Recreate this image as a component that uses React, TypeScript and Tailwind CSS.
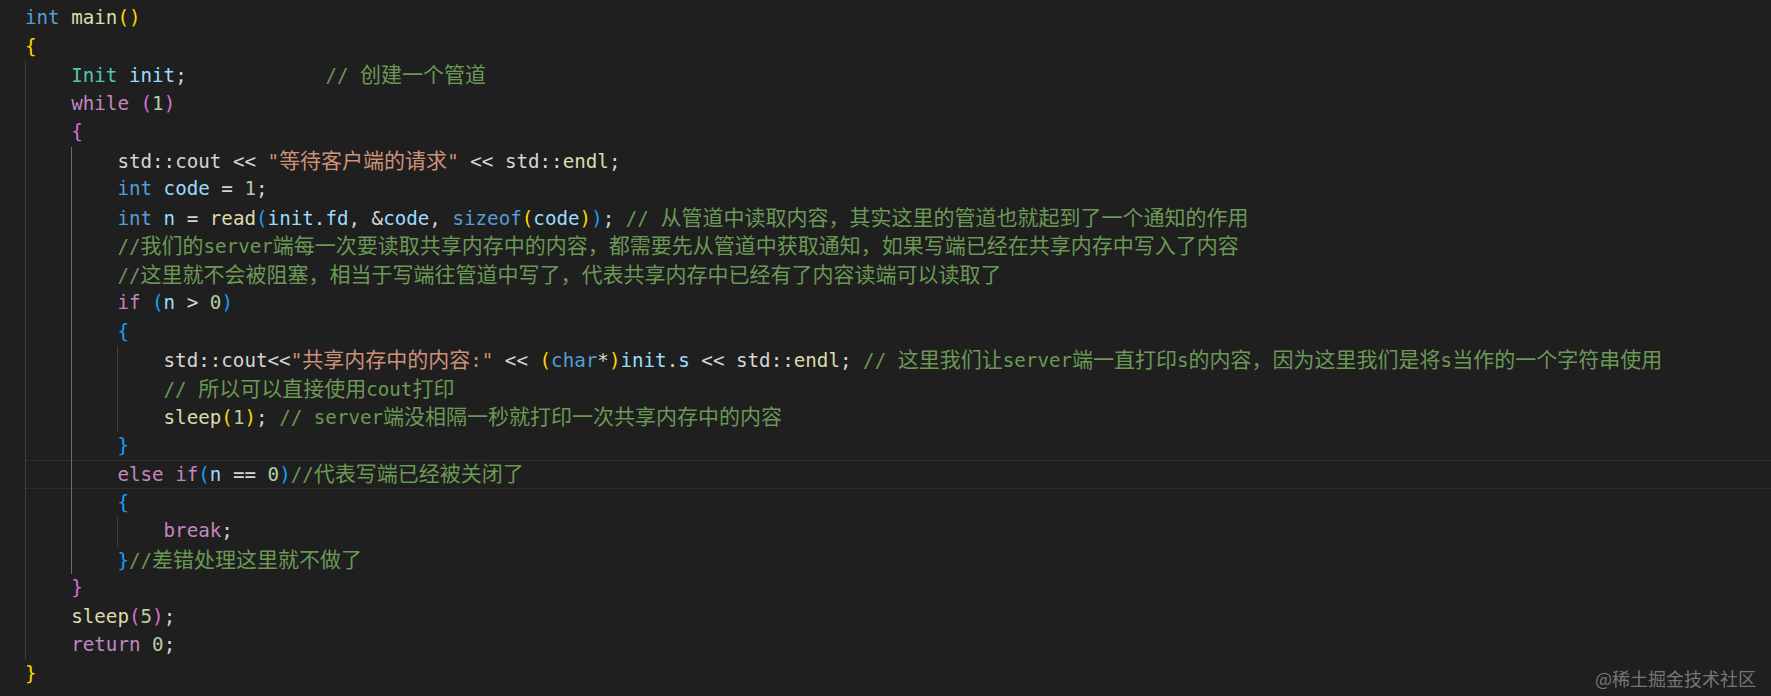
import React from 'react';

const C = {
  k: 'text-[#569cd6]',
  t: 'text-[#4ec9b0]',
  v: 'text-[#9cdcfe]',
  f: 'text-[#dcdcaa]',
  c: 'text-[#c586c0]',
  n: 'text-[#b5cea8]',
  s: 'text-[#ce9178]',
  m: 'text-[#6a9955]',
  p: 'text-[#d4d4d4]',
  y: 'text-[#ffd700]',
  o: 'text-[#da70d6]',
  b: 'text-[#179fff]',
};

type Tok = [keyof typeof C, string];
type Line = { indent: number; toks: Tok[] };

const lines: Line[] = [
  { indent: 0, toks: [['k', 'int'], ['p', ' '], ['f', 'main'], ['y', '()']] },
  { indent: 0, toks: [['y', '{']] },
  { indent: 1, toks: [['t', 'Init'], ['p', ' '], ['v', 'init'], ['p', ';            '], ['m', '// 创建一个管道']] },
  { indent: 1, toks: [['c', 'while'], ['p', ' '], ['o', '('], ['n', '1'], ['o', ')']] },
  { indent: 1, toks: [['o', '{']] },
  { indent: 2, toks: [['p', 'std::cout << '], ['s', '"等待客户端的请求"'], ['p', ' << std::'], ['f', 'endl'], ['p', ';']] },
  { indent: 2, toks: [['k', 'int'], ['p', ' '], ['v', 'code'], ['p', ' = '], ['n', '1'], ['p', ';']] },
  {
    indent: 2,
    toks: [
      ['k', 'int'], ['p', ' '], ['v', 'n'], ['p', ' = '], ['f', 'read'], ['b', '('], ['v', 'init'], ['p', '.'], ['v', 'fd'],
      ['p', ', &'], ['v', 'code'], ['p', ', '], ['k', 'sizeof'], ['y', '('], ['v', 'code'], ['y', ')'], ['b', ')'], ['p', '; '],
      ['m', '// 从管道中读取内容，其实这里的管道也就起到了一个通知的作用'],
    ],
  },
  { indent: 2, toks: [['m', '//我们的server端每一次要读取共享内存中的内容，都需要先从管道中获取通知，如果写端已经在共享内存中写入了内容']] },
  { indent: 2, toks: [['m', '//这里就不会被阻塞，相当于写端往管道中写了，代表共享内存中已经有了内容读端可以读取了']] },
  { indent: 2, toks: [['c', 'if'], ['p', ' '], ['b', '('], ['v', 'n'], ['p', ' > '], ['n', '0'], ['b', ')']] },
  { indent: 2, toks: [['b', '{']] },
  {
    indent: 3,
    toks: [
      ['p', 'std::cout<<'], ['s', '"共享内存中的内容:"'], ['p', ' << '], ['y', '('], ['k', 'char'], ['p', '*'], ['y', ')'],
      ['v', 'init'], ['p', '.'], ['v', 's'], ['p', ' << std::'], ['f', 'endl'], ['p', '; '],
      ['m', '// 这里我们让server端一直打印s的内容，因为这里我们是将s当作的一个字符串使用'],
    ],
  },
  { indent: 3, toks: [['m', '// 所以可以直接使用cout打印']] },
  { indent: 3, toks: [['f', 'sleep'], ['y', '('], ['n', '1'], ['y', ')'], ['p', '; '], ['m', '// server端没相隔一秒就打印一次共享内存中的内容']] },
  { indent: 2, toks: [['b', '}']] },
  { indent: 2, toks: [['c', 'else'], ['p', ' '], ['c', 'if'], ['b', '('], ['v', 'n'], ['p', ' == '], ['n', '0'], ['b', ')'], ['m', '//代表写端已经被关闭了']] },
  { indent: 2, toks: [['b', '{']] },
  { indent: 3, toks: [['c', 'break'], ['p', ';']] },
  { indent: 2, toks: [['b', '}'], ['m', '//差错处理这里就不做了']] },
  { indent: 1, toks: [['o', '}']] },
  { indent: 1, toks: [['f', 'sleep'], ['o', '('], ['n', '5'], ['o', ')'], ['p', ';']] },
  { indent: 1, toks: [['c', 'return'], ['p', ' '], ['n', '0'], ['p', ';']] },
  { indent: 0, toks: [['y', '}']] },
];

const CJK = /([\u3000-\u303f\u4e00-\u9fff\uff00-\uffef]+)/;

// CJK glyphs are a full 21px wide next to the 11.55px mono cells
const renderText = (text: string) =>
  text.split(CJK).map((part, i) =>
    i % 2 === 1 ? (
      <span key={i} className="text-[21px]">
        {part}
      </span>
    ) : (
      part
    )
  );

const CURRENT_LINE = 16;

export default function App() {
  return (
    <div className="relative h-[696px] w-full overflow-hidden bg-[#1f1f1f] font-['DejaVu_Sans_Mono','Noto_Sans_CJK_SC',monospace] text-[19.2px] leading-[28.5px] text-[#d4d4d4]">
      <div className="pl-[25px] pt-[4px]">
        {lines.map((line, i) => (
          <div
            key={i}
            className={`h-[28.5px] whitespace-pre ${
              i === CURRENT_LINE ? 'shadow-[inset_0_1px_0_#2e2e2e,inset_0_-1px_0_#2e2e2e]' : ''
            }`}
          >
            {Array.from({ length: line.indent }).map((_, k) => (
              <span
                key={k}
                className={`inline-block h-[28.5px] w-[46.2px] border-l align-top ${
                  k === 1 ? 'border-[#6e6e6e]' : 'border-[#404040]'
                }`}
              />
            ))}
            {line.toks.map(([type, text], j) => (
              <span key={j} className={C[type]}>
                {renderText(text)}
              </span>
            ))}
          </div>
        ))}
      </div>
      <div className="absolute bottom-[6px] right-[15px] font-['Noto_Sans_CJK_SC',sans-serif] text-[18px] leading-[24px] text-[#767676]">
        @稀土掘金技术社区
      </div>
    </div>
  );
}
